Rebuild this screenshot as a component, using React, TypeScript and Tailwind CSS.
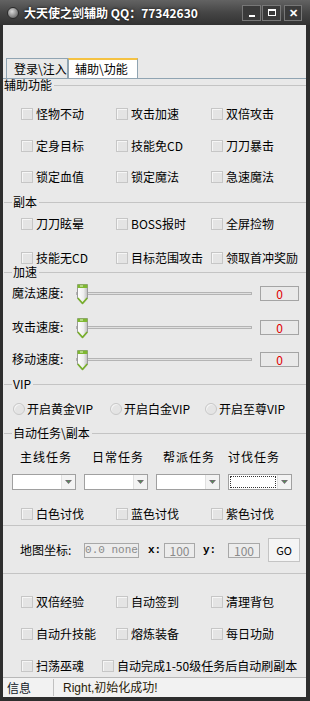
import React from "react";

function Cb({ label }: { label: string }) {
  return (
    <div className="flex items-center whitespace-nowrap">
      <span className="w-[12px] h-[12px] shrink-0 border border-[#c6c6c6] bg-[#e4e4e4] shadow-[inset_1px_1px_0_#f6f6f6]" />
      <span className="ml-[3px]">{label}</span>
    </div>
  );
}

function Row3({ items, cls }: { items: string[]; cls: string }) {
  return (
    <div className={`flex items-center pl-[18px] ${cls}`}>
      {items.map((t, i) => (
        <div key={i} className="w-[96px]">
          <Cb label={t} />
        </div>
      ))}
    </div>
  );
}

function GH({ label, cls, noLeft }: { label: string; cls: string; noLeft?: boolean }) {
  return (
    <div className={`flex items-center ${cls}`}>
      {noLeft ? null : <span className="w-[8px] h-px bg-[#c4c4c4] ml-[1px]" />}
      <span className={noLeft ? "px-[1px] leading-[12px]" : "px-[1px] leading-[12px]"}>{label}</span>
      <span className="flex-1 h-px bg-[#c4c4c4] ml-[1px]" />
    </div>
  );
}

function Thumb() {
  return (
    <svg width="11" height="21" viewBox="0 0 11 21" className="absolute left-0 top-[-9px]">
      <defs>
        <linearGradient id="tg" x1="0" x2="1" y1="0" y2="0">
          <stop offset="0" stopColor="#ffffff" />
          <stop offset="0.6" stopColor="#eeeeee" />
          <stop offset="1" stopColor="#bdbdbd" />
        </linearGradient>
      </defs>
      <path d="M0.5 0.5 H10.5 V14.5 L5.5 20 L0.5 14.5 Z" fill="url(#tg)" stroke="#9a9a9a" />
      <rect x="0.5" y="0.5" width="10" height="3.5" fill="#7fb832" />
      <rect x="3" y="1.5" width="3" height="1" fill="#e8f5d0" />
      <path d="M0.8 14 L5.5 19.3 L10.2 14" stroke="#78b02a" strokeWidth="1.6" fill="none" />
    </svg>
  );
}

function Slider({ label, cls }: { label: string; cls: string }) {
  return (
    <div className={`flex items-center ${cls}`}>
      <span className="ml-[9px] w-[64px] whitespace-nowrap">{label}</span>
      <div className="relative w-[176px] h-[3px] border border-[#b4b4b4] bg-[#e0e0e0]">
        <Thumb />
      </div>
      <div className="ml-[8px] w-[39px] h-[15px] border border-[#a4a4a4] bg-[#e9e9e9] flex items-center justify-center text-[#e00000] leading-[13px]">
        0
      </div>
    </div>
  );
}

function Radio({ label, w }: { label: string; w: string }) {
  return (
    <div className={`flex items-center whitespace-nowrap ${w}`}>
      <span className="w-[12px] h-[12px] rounded-full border border-[#c8c8c8] bg-[#e4e4e4] shadow-[inset_1px_1px_0_#f4f4f4]" />
      <span className="ml-[2px]">{label}</span>
    </div>
  );
}

function Combo({ focus }: { focus?: boolean }) {
  return (
    <div className="w-[64px] h-[16px] border border-[#a0a0a0] bg-white flex">
      <div className="flex-1 p-[1px]">
        {focus ? <div className="w-full h-full border border-dotted border-[#333]" /> : null}
      </div>
      <div className="w-[14px] h-full bg-[#f3f3f3] border-l border-[#e0e0e0] flex items-center justify-center">
        <svg width="7" height="5" viewBox="0 0 7 5">
          <path d="M0 0 H7 L3.5 4 Z" fill="#6e6e6e" />
          <rect x="3" y="1" width="1" height="1" fill="#3cb043" />
        </svg>
      </div>
    </div>
  );
}

function Input({ text, w }: { text: string; w: string }) {
  return (
    <div className={`h-[15px] border border-[#a8a8a8] bg-[#ececec] flex items-center justify-center text-[#8a8a8a] leading-[13px] ${w}`}>
      {text}
    </div>
  );
}

export default function App() {
  return (
    <div className="w-[310px] h-[701px] bg-[#2e2e2e] flex flex-col font-['Noto_Sans_CJK_SC','Noto_Sans',sans-serif] text-[12px] text-black overflow-hidden">
      {/* Title bar */}
      <div className="h-[25px] shrink-0 bg-linear-to-b from-[#636363] via-[#464646] to-[#323232] flex items-center relative">
        <div className="ml-[7px] w-[12px] h-[12px] rounded-full bg-[radial-gradient(circle_at_40%_35%,#d8d8d8,#8a8a8a_55%,#4a4a4a)] border border-[#2a2a2a]" />
        <span className="ml-[5px] text-white font-bold text-[12px] leading-[14px] whitespace-nowrap [text-shadow:0_0_3px_rgba(0,0,0,0.9)]">
          大天使之剑辅助 QQ：77342630
        </span>
        <div className="ml-auto mr-[8px] flex gap-[1px]">
          <div className="w-[19px] h-[16px] border border-[#777] bg-[#3a3a3a] flex items-end justify-center pb-[3px]">
            <span className="w-[6px] h-[2px] bg-white" />
          </div>
          <div className="w-[19px] h-[16px] border border-[#777] bg-[#3a3a3a] flex items-center justify-center">
            <span className="w-[8px] h-[7px] border border-white border-t-2" />
          </div>
          <div className="ml-[2px] w-[18px] h-[16px] border border-[#777] bg-[#3a3a3a] flex items-center justify-center text-white font-bold text-[11px] leading-none">
            ✕
          </div>
        </div>
      </div>

      {/* Client */}
      <div className="flex-1 ml-[3px] mr-[4px] mb-[4px] bg-[#e9e9e9] flex flex-col">
        <div className="h-[33px] shrink-0" />
        {/* Tabs */}
        <div className="h-[21px] shrink-0 flex items-end border-b border-[#90a4b2]">
          <div className="ml-[3px] w-[62px] h-[20px] border border-b-0 border-[#90a4b2] bg-[#e9e9e9] flex items-center pl-[7px] whitespace-nowrap">
            登录\注入
          </div>
          <div className="w-[70px] h-[20px] border-x border-[#90a4b2] border-t-2 border-t-[#f5c242] bg-white flex items-center pl-[6px] whitespace-nowrap">
            辅助\功能
          </div>
        </div>

        <GH label="辅助功能" cls="h-[12px]" noLeft />
        <Row3 items={["怪物不动", "攻击加速", "双倍攻击"]} cls="mt-[9px] h-[28px]" />
        <Row3 items={["定身目标", "技能免CD", "刀刀暴击"]} cls="mt-[4px] h-[28px]" />
        <Row3 items={["锁定血值", "锁定魔法", "急速魔法"]} cls="mt-[3px] h-[28px]" />

        <GH label="副本" cls="mt-[3px] h-[16px]" />
        <Row3 items={["刀刀眩晕", "BOSS报时", "全屏捡物"]} cls="mt-[2px] h-[24px]" />
        <Row3 items={["技能无CD", "目标范围攻击", "领取首冲奖励"]} cls="mt-[14px] h-[16px]" />

        <GH label="加速" cls="h-[12px]" />
        <Slider label="魔法速度:" cls="mt-[3px] h-[24px]" />
        <Slider label="攻击速度:" cls="mt-[10px] h-[24px]" />
        <Slider label="移动速度:" cls="mt-[8px] h-[24px]" />

        <GH label="VIP" cls="mt-[7px] h-[12px]" />
        <div className="mt-[9px] h-[20px] flex items-center pl-[10px]">
          <Radio label="开启黄金VIP" w="w-[97px]" />
          <Radio label="开启白金VIP" w="w-[95px]" />
          <Radio label="开启至尊VIP" w="w-[90px]" />
        </div>

        <GH label="自动任务\副本" cls="mt-[8px] h-[12px]" />
        <div className="mt-[10px] h-[16px] flex items-center pl-[9px]">
          <span className="w-[72px] pl-[8px] tracking-[1px] whitespace-nowrap">主线任务</span>
          <span className="w-[72px] pl-[8px] tracking-[1px] whitespace-nowrap">日常任务</span>
          <span className="w-[72px] pl-[7px] tracking-[1px] whitespace-nowrap">帮派任务</span>
          <span className="w-[72px] pl-[0px] tracking-[1px] whitespace-nowrap">讨伐任务</span>
        </div>
        <div className="mt-[9px] h-[16px] flex pl-[9px] gap-[8px]">
          <Combo />
          <Combo />
          <Combo />
          <Combo focus />
        </div>
        <Row3 items={["白色讨伐", "蓝色讨伐", "紫色讨伐"]} cls="mt-[14px] h-[20px]" />
        <div className="mt-[1px] h-px bg-[#c4c4c4]" />

        <div className="mt-[12px] h-[24px] flex items-center">
          <span className="ml-[17px] w-[64px] whitespace-nowrap">地图坐标:</span>
          <Input text="0.0 none" w="w-[55px] font-['Liberation_Mono',monospace] text-[11px]" />
          <span className="ml-[9px] w-[16px] font-bold font-['Liberation_Mono',monospace] text-[11px]">x:</span>
          <Input text="100" w="w-[31px]" />
          <span className="ml-[8px] w-[25px] font-bold font-['Liberation_Mono',monospace] text-[11px]">y:</span>
          <Input text="100" w="w-[32px]" />
          <div className="ml-[8px] w-[32px] h-[24px] border border-[#c4c4c4] bg-[#f5f5f5] flex items-center justify-center text-[11px]">
            GO
          </div>
        </div>
        <div className="mt-[11px] h-px bg-[#c4c4c4]" />

        <Row3 items={["双倍经验", "自动签到", "清理背包"]} cls="mt-[16px] h-[24px]" />
        <Row3 items={["自动升技能", "熔炼装备", "每日功勋"]} cls="mt-[8px] h-[24px]" />
        <div className="mt-[10px] h-[20px] flex items-center pl-[18px]">
          <div className="w-[81px]">
            <Cb label="扫荡巫魂" />
          </div>
          <Cb label="自动完成1-50级任务后自动刷副本" />
        </div>

        {/* Status bar */}
        <div className="mt-auto h-[20px] shrink-0 border-t border-[#b8b8b8] bg-[#f2f2f2] flex items-center">
          <span className="ml-[4px] w-[46px] text-[#101828]">信息</span>
          <span className="w-px h-[17px] bg-[#c0c0c0]" />
          <span className="ml-[9px] text-[#2a1c08] font-['Liberation_Sans','Noto_Sans_CJK_SC',sans-serif]">Right,初始化成功!</span>
        </div>
      </div>
    </div>
  );
}
